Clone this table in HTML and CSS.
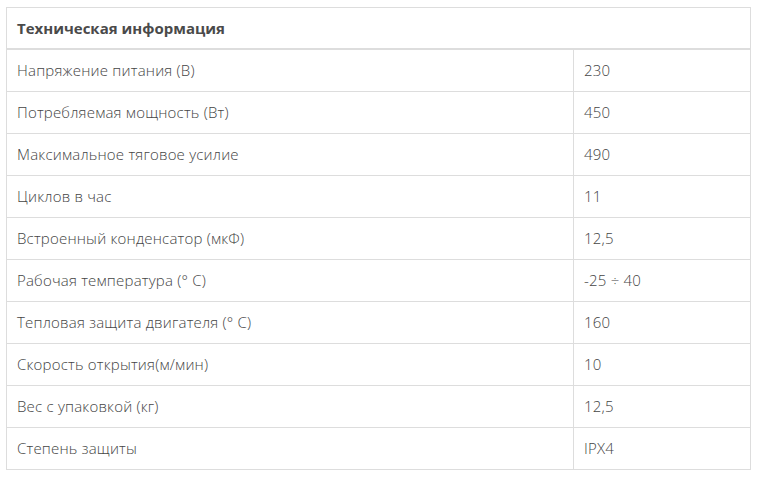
FILE: index.html
```html
<!DOCTYPE html>
<html lang="ru">
<head>
<meta charset="utf-8">
<link rel="stylesheet" href="styles.css">
</head>
<body>
<table class="spec">
  <thead>
    <tr><th colspan="2">Техническая информация</th></tr>
  </thead>
  <tbody>
    <tr><td class="name">Напряжение питания (В)</td><td class="val">230</td></tr>
    <tr><td class="name">Потребляемая мощность (Вт)</td><td class="val">450</td></tr>
    <tr><td class="name">Максимальное тяговое усилие</td><td class="val">490</td></tr>
    <tr><td class="name">Циклов в час</td><td class="val">11</td></tr>
    <tr><td class="name">Встроенный конденсатор (мкФ)</td><td class="val">12,5</td></tr>
    <tr><td class="name">Рабочая температура (° С)</td><td class="val">-25 ÷ 40</td></tr>
    <tr><td class="name">Тепловая защита двигателя (° С)</td><td class="val">160</td></tr>
    <tr><td class="name">Скорость открытия(м/мин)</td><td class="val">10</td></tr>
    <tr><td class="name">Вес с упаковкой (кг)</td><td class="val">12,5</td></tr>
    <tr><td class="name">Степень защиты</td><td class="val">IPX4</td></tr>
  </tbody>
</table>
</body>
</html>
```

FILE: styles.css
```css
html, body {
  margin: 0;
  background: #fff;
}
body {
  padding: 7px 9px 0 6px;
  font-family: "Open Sans", "Liberation Sans", sans-serif;
  font-size: 15px;
  font-weight: 300;
  color: #444;
}
.spec {
  width: 745px;
  border-collapse: collapse;
}
.spec th {
  text-align: left;
  font-weight: 700;
  color: #4a4a4a;
  height: 41px;
  padding: 0 10px;
  border: 1px solid #ddd;
  border-bottom: 2px solid #ddd;
  box-sizing: border-box;
}
.spec td {
  height: 41px;
  padding: 0 10px;
  border: 1px solid #ddd;
  vertical-align: middle;
  letter-spacing: 0.2px;
}
.spec .name {
  width: 546px;
}
```
